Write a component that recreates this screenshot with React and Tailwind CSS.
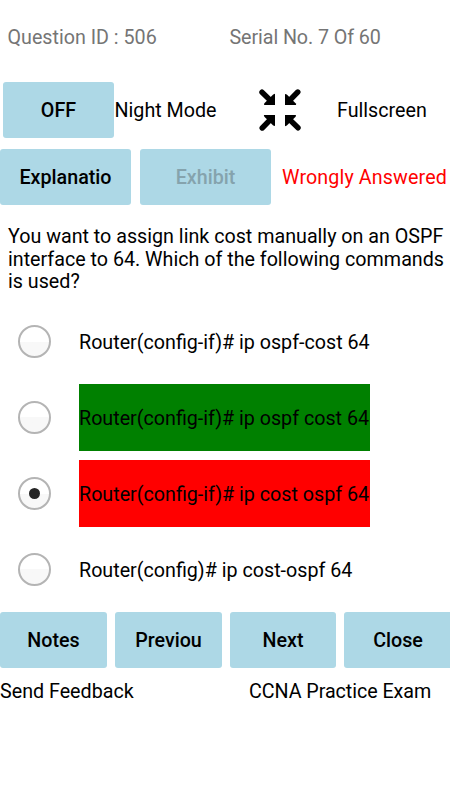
import React from "react";

const options = [
  { text: "Router(config-if)# ip ospf-cost 64", tone: "" },
  { text: "Router(config-if)# ip ospf cost 64", tone: "bg-[#008000]" },
  { text: "Router(config-if)# ip cost ospf 64", tone: "bg-[#ff0000]", checked: true },
  { text: "Router(config)# ip cost-ospf 64", tone: "" },
];

function Button({ children, className = "" }) {
  return (
    <button
      className={`flex h-14 shrink-0 items-center justify-center rounded-[3px] bg-[#add8e6] pt-[3px] font-medium whitespace-nowrap ${className}`}
    >
      {children}
    </button>
  );
}

function Radio({ checked }) {
  return (
    <span
      role="radio"
      aria-checked={!!checked}
      className="flex size-[33px] shrink-0 items-center justify-center rounded-full border-2 border-[#b4b4b4] bg-linear-to-b from-white from-50% to-[#f8f8f8] to-50%"
    >
      {checked && <span className="size-[11px] rounded-full bg-[#252525]" />}
    </span>
  );
}

function CollapseIcon() {
  return (
    <svg viewBox="0 0 42 42" className="size-[42px] shrink-0" fill="#000" stroke="#000">
      {[0, 90, 180, 270].map((angle) => (
        <g key={angle} transform={`rotate(${angle} 21 21)`}>
          <path d="M3 3.2L11.5 11.5" strokeWidth="5.4" strokeLinecap="round" />
          <path d="M16 4.8V16H5L5.4 14.2L14.2 5.4Z" stroke="none" />
        </g>
      ))}
    </svg>
  );
}

export default function App() {
  return (
    <main className="h-[800px] w-[450px] overflow-hidden bg-white font-['Roboto',sans-serif] text-[19.7px] leading-[22.5px] text-black">
      <header className="flex h-[73px] pt-[27px] pl-[7.5px] text-[#757575]">
        <span className="w-[222px]">Question ID : 506</span>
        <span className="tracking-[-0.08px]">Serial No. 7 Of 60</span>
      </header>

      <div className="mt-[9px] flex h-14 items-center pl-[3px]">
        <Button className="w-[111px]">OFF</Button>
        <span className="w-[145px] pt-[3px] pl-[0.5px] whitespace-nowrap">Night Mode</span>
        <CollapseIcon />
        <span className="ml-9 pt-[3px]">Fullscreen</span>
      </div>

      <div className="mt-[11px] flex h-14 items-center">
        <Button className="w-[131px]">Explanatio</Button>
        <Button className="ml-[9px] w-[131px] text-[#85a3ad]">Exhibit</Button>
        <span className="ml-[11px] pt-[3px] tracking-[0.12px] whitespace-nowrap text-[#ff0000]">Wrongly Answered</span>
      </div>

      <p className="mt-[21px] pl-2 whitespace-nowrap">
        You want to assign link cost manually on an OSPF
        <br />
        interface to 64. Which of the following commands
        <br />
        is used?
      </p>

      <div role="radiogroup" className="mt-[14.5px] flex flex-col gap-[9px]">
        {options.map(({ text, tone, checked }) => (
          <div key={text} className="flex h-[67px] items-center pl-[18px]">
            <Radio checked={checked} />
            <span className={`ml-7 flex h-full w-[291px] items-center pt-1 whitespace-nowrap ${tone}`}>{text}</span>
          </div>
        ))}
      </div>

      <nav className="mt-[9px] flex">
        <Button className="mr-2 w-[107px]">Notes</Button>
        <Button className="mr-2 w-[107px]">Previou</Button>
        <Button className="mr-2 w-[106px]">Next</Button>
        <Button className="w-[108px]">Close</Button>
      </nav>

      <footer className="mt-[13px] flex">
        <span className="w-[249px]">Send Feedback</span>
        <span className="tracking-[-0.05px]">CCNA Practice Exam</span>
      </footer>
    </main>
  );
}
